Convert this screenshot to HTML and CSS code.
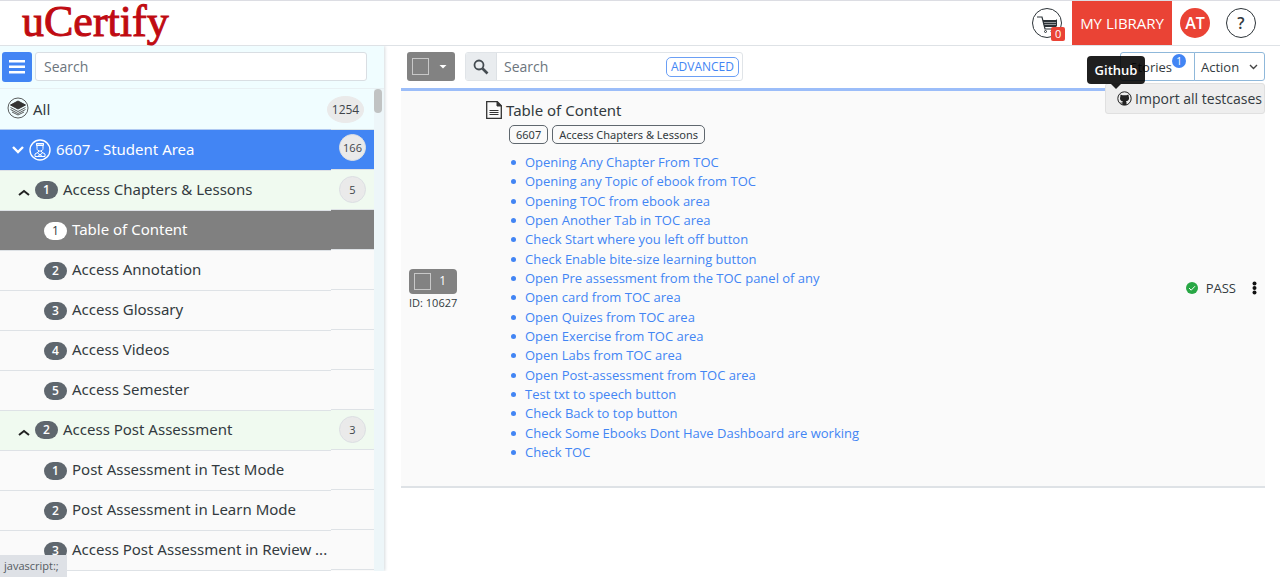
FILE: index.html
```html
<!DOCTYPE html>
<html lang="en">
<head>
<meta charset="utf-8">
<meta name="viewport" content="width=device-width, initial-scale=1">
<title>uCertify</title>
<link rel="stylesheet" href="styles.css">
</head>
<body>
<header class="topbar">
  <a class="logo" href="#">uCertify</a>
  <div class="top-actions">
    <button class="round cart" aria-label="Cart">
      <svg width="30" height="30" viewBox="0 0 30 30" fill="none" stroke="#2c3338"><path d="M4 8h5l3 12h12" stroke-width="1.200"/><path d="M10 12h13.500M10.500 14.500h13M11 17h12" stroke-width="1.800"/><path d="M23.500 10.500v7" /><circle cx="12.500" cy="22.500" r="1"/><circle cx="19" cy="22.500" r="1"/></svg>
      <span class="cart-count">0</span>
    </button>
    <button class="library">MY LIBRARY</button>
    <button class="avatar">AT</button>
    <button class="round help">?</button>
  </div>
</header>
<div class="workspace">
  <aside class="sidebar">
    <div class="side-search">
      <button class="menu-btn" aria-label="Menu"><svg width="16" height="14" viewBox="0 0 16 14" fill="#fff"><path d="M0 0h16v2.500H0zM0 5.500h16V8H0zM0 11h16v2.500H0z"/></svg></button>
      <input class="side-input" type="text" placeholder="Search" aria-label="Search areas">
    </div>
    <div class="tree-wrap">
      <ul class="tree">
        <li class="row all">
          <a class="label" href="#"><svg width="22" height="22" viewBox="0 0 22 22" fill="none" stroke="#333"><circle cx="11" cy="11" r="10" stroke-width=".8"/><path d="M11 4 3.500 8 11 12l7.500-4z" fill="#333"/><path d="M3.500 10.500 11 14.500l7.500-4M3.500 12.500l7.500 4 7.500-4M5 15l6 3 6-3" stroke-width=".8"/></svg><span class="text">All</span></a>
          <span class="end"><span class="count wide">1254</span></span>
        </li>
        <li class="row area">
          <a class="label" href="#"><svg width="12" height="8" viewBox="0 0 12 8" fill="none" stroke="#fff" stroke-width="2.400"><path d="m1 1 5 5 5-5"/></svg><svg class="person" width="22" height="22" viewBox="0 0 22 22" fill="none" stroke="#fff"><circle cx="11" cy="11" r="10" stroke-width="1.400"/><path d="M7 5h8M7.500 4.500h7v2h-7zM8 6.500v3c0 3.500 6 3.500 6 0v-3M9.500 11.500v1.500L6 15v2.500h10V15l-3.500-2v-1.500M8.500 14l5 3.500M13.500 14l-5 3.500"/></svg><span class="text">6607 - Student Area</span></a>
          <span class="end"><span class="count raised">166</span></span>
        </li>
        <li class="row chapter">
          <a class="label" href="#"><svg class="fold" width="12" height="7" viewBox="0 0 12 7" fill="none" stroke="#222" stroke-width="2"><path d="m1 6 5-4 5 4"/></svg><span class="num">1</span><span class="text">Access Chapters &amp; Lessons</span></a>
          <span class="end"><span class="count">5</span></span>
        </li>
        <li class="row lesson active"><a class="label" href="#"><span class="num">1</span><span class="text">Table of Content</span></a><span class="end"></span></li>
        <li class="row lesson"><a class="label" href="#"><span class="num">2</span><span class="text">Access Annotation</span></a><span class="end"></span></li>
        <li class="row lesson"><a class="label" href="#"><span class="num">3</span><span class="text">Access Glossary</span></a><span class="end"></span></li>
        <li class="row lesson"><a class="label" href="#"><span class="num">4</span><span class="text">Access Videos</span></a><span class="end"></span></li>
        <li class="row lesson"><a class="label" href="#"><span class="num">5</span><span class="text">Access Semester</span></a><span class="end"></span></li>
        <li class="row chapter">
          <a class="label" href="#"><svg class="fold" width="12" height="7" viewBox="0 0 12 7" fill="none" stroke="#222" stroke-width="2"><path d="m1 6 5-4 5 4"/></svg><span class="num">2</span><span class="text">Access Post Assessment</span></a>
          <span class="end"><span class="count">3</span></span>
        </li>
        <li class="row lesson"><a class="label" href="#"><span class="num">1</span><span class="text">Post Assessment in Test Mode</span></a><span class="end"></span></li>
        <li class="row lesson"><a class="label" href="#"><span class="num">2</span><span class="text">Post Assessment in Learn Mode</span></a><span class="end"></span></li>
        <li class="row lesson"><a class="label" href="#"><span class="num">3</span><span class="text">Access Post Assessment in Review ...</span></a><span class="end"></span></li>
      </ul>
      <div class="scroll"><div class="thumb"></div></div>
    </div>
  </aside>
  <main class="content">
    <div class="toolbar">
      <div class="select-all"><input class="tick" type="checkbox" aria-label="Select all"><button class="caret" aria-label="Selection options"></button></div>
      <div class="search-group">
        <button class="search-btn" aria-label="Search"><svg width="16" height="16" viewBox="0 0 16 16" fill="none" stroke="#444b51"><circle cx="6" cy="6" r="4.500" stroke-width="1.800"/><path d="m9.500 9.500 5 5" stroke-width="2.600"/></svg></button>
        <input class="search-input" type="text" placeholder="Search" aria-label="Search test cases">
        <button class="advanced">ADVANCED</button>
      </div>
      <div class="menus">
        <button class="menu stories">Stories<span class="story-count">1</span></button>
        <button class="menu action" aria-expanded="true">Action<svg width="9" height="6" viewBox="0 0 9 6" fill="none" stroke="#444" stroke-width="1.400"><path d="m1 1 3.500 3.500L8 1"/></svg></button>
        <div class="dropdown">
          <a href="#" class="import"><svg width="15" height="15" viewBox="0 0 15 15"><circle cx="7.500" cy="7.500" r="6.700" fill="none" stroke="#222"/><path d="M3.500 3.500 5.500 4.200h4l2-.7.300 2.200c1 3-1 4.300-2.800 4.500l.5 1V14h-4v-1.500c-1.300.3-1.800-.5-2.300-1.200 1 .2 1.300.5 2.300.2l.3-1.200C4 10 2.400 8.700 3.300 5.700z" fill="#222"/></svg>Import all testcases</a>
          <div class="tooltip" role="tooltip">Github</div>
        </div>
      </div>
    </div>
    <article class="case">
      <div class="case-id">
        <label class="case-check"><input class="tick" type="checkbox"><span>1</span></label>
        <span class="id-text">ID: 10627</span>
      </div>
      <div class="case-body">
        <h1 class="case-title"><svg width="16" height="18" viewBox="0 0 16 18" fill="none" stroke="#333"><path d="M.7.700h10.600l4 4v12.600H.7z" stroke-width="1.300"/><path d="M11 .7V5h4.300z" fill="#333"/><path d="M3.500 9.500h9M3.500 11.500h9M3.500 13.500h9"/></svg>Table of Content</h1>
        <div class="tags"><span class="tag">6607</span><span class="tag">Access Chapters &amp; Lessons</span></div>
        <ul class="links">
          <li><a href="#">Opening Any Chapter From TOC</a></li>
          <li><a href="#">Opening any Topic of ebook from TOC</a></li>
          <li><a href="#">Opening TOC from ebook area</a></li>
          <li><a href="#">Open Another Tab in TOC area</a></li>
          <li><a href="#">Check Start where you left off button</a></li>
          <li><a href="#">Check Enable bite-size learning button</a></li>
          <li><a href="#">Open Pre assessment from the TOC panel of any</a></li>
          <li><a href="#">Open card from TOC area</a></li>
          <li><a href="#">Open Quizes from TOC area</a></li>
          <li><a href="#">Open Exercise from TOC area</a></li>
          <li><a href="#">Open Labs from TOC area</a></li>
          <li><a href="#">Open Post-assessment from TOC area</a></li>
          <li><a href="#">Test txt to speech button</a></li>
          <li><a href="#">Check Back to top button</a></li>
          <li><a href="#">Check Some Ebooks Dont Have Dashboard are working</a></li>
          <li><a href="#">Check TOC</a></li>
        </ul>
      </div>
      <div class="status">
        <svg width="12" height="12" viewBox="0 0 12 12"><circle cx="6" cy="6" r="6" fill="#28a745"/><path d="m3 6 2.200 2.200L9 4.200" fill="none" stroke="#fff" stroke-width="1"/></svg>
        <span>PASS</span>
        <button class="more" aria-label="More"><svg width="5" height="14" viewBox="0 0 5 14" fill="#111"><circle cx="2.500" cy="2.500" r="2"/><circle cx="2.500" cy="7" r="2"/><circle cx="2.500" cy="11.500" r="2"/></svg></button>
      </div>
    </article>
  </main>
</div>
<div class="statusbar">javascript:;</div>
</body>
</html>
```
FILE: styles.css
```css
* { box-sizing: border-box; }
body { margin: 0; background: #fff; color: #333a40; font: 14px/20px "Open Sans", "Noto Sans", sans-serif; overflow: hidden; }
button, input { font: inherit; color: inherit; margin: 0; }
button { padding: 0; border: 0; background: none; cursor: pointer; }
a { color: inherit; text-decoration: none; }
ul { list-style: none; margin: 0; padding: 0; }
svg { flex: none; display: block; }
::placeholder { color: #6c757d; opacity: 1; }

.topbar { display: flex; justify-content: space-between; align-items: center; height: 46px; padding: 0 24px 0 22px; border-top: 1px solid #dcdde3; border-bottom: 1px solid #dee2e6; }
.logo { padding-bottom: 2px; font: 44px/42px "Liberation Serif", serif; color: #c00b12; -webkit-text-stroke: 1px #c00b12; }
.top-actions { display: flex; align-items: center; }
.round { position: relative; width: 30px; height: 30px; border: 1px solid #2c3338; border-radius: 50%; display: grid; place-items: center; }
.cart { margin-right: 10px; }
.cart-count { position: absolute; right: -4px; bottom: -4px; width: 14px; height: 14px; border-radius: 2px; background: #ea4335; color: #fff; font-size: 11px; line-height: 14px; }
.library { height: 44px; padding: 0 8px; background: #ea4335; color: #fff; font-size: 15px; }
.avatar { width: 30px; height: 30px; margin: 0 16px 0 8px; border-radius: 50%; background: #ea4335; color: #fff; font-size: 16px; font-weight: 600; }
.help { font-size: 16px; font-weight: 600; }

.workspace { display: flex; align-items: flex-start; }
.sidebar { flex: 0 0 30%; min-width: 0; background: #f0fdff; box-shadow: 1px 0 3px #d5dade; clip-path: inset(0 -6px 0 0); }
.side-search { display: flex; gap: 3px; height: 43px; padding: 6px 17px 6px 2px; border-bottom: 1px solid #e8f0f3; }
.menu-btn { width: 30px; height: 30px; border-radius: 3px; background: #4285f4; display: grid; place-items: center; }
.side-input { flex: 1; min-width: 0; height: 29px; padding: 0 8px; border: 1px solid #d9dee3; border-radius: 3px; background: #fff; }
.tree-wrap { display: flex; }
.tree { flex: 1; min-width: 0; }
.scroll { width: 10px; background: #edf6f9; }
.thumb { width: 8px; height: 24px; border-radius: 4px; background: #c1c3c3; }
.row { display: flex; align-items: flex-start; height: 40px; background: #fafafa; }
.row:last-child { height: 41px; }
.label { flex: 1; min-width: 0; height: 41px; display: flex; align-items: center; padding-top: 1px; border-bottom: 1px solid #dee2e6; }
.end { flex: none; width: 43px; height: 40px; border-bottom: 1px solid #dee2e6; display: flex; justify-content: flex-end; align-items: center; padding-right: 8px; }
.text { padding-bottom: 4px; white-space: nowrap; font: 15px/22px "Noto Sans", sans-serif; }
.all { height: 41px; background: #f0fdff; }
.all .label { padding-left: 7px; gap: 4px; border-color: #b0c9f2; }
.all .end { height: 41px; padding-right: 10px; border-color: #dbe4e8; }
.all .label svg { margin-bottom: 3px; }
.all .text { padding-bottom: 2px; }
.area { background: #4285f4; color: #fff; }
.area .label { padding-left: 12px; gap: 5px; }
.area .label svg { margin-bottom: 2px; }
.chapter { background: #f0faf0; }
.chapter .label { padding-left: 18px; gap: 5px; }
.chapter .num { margin-bottom: 2px; }
.chapter .fold { margin-top: 3px; }
.lesson .label { padding-left: 44px; gap: 5px; }
.active { background: #808080; color: #fff; }
.num { width: 23px; height: 18px; border-radius: 9px; background: #5f676e; color: #fff; font-size: 12px; font-weight: 600; line-height: 18px; text-align: center; }
.active .num { background: #fff; color: #333a40; font-weight: 400; }
.count { width: 27px; height: 27px; border: 1px solid #dcdfe3; border-radius: 50%; background: #eaeaea; color: #40454a; font-size: 11px; line-height: 25px; text-align: center; }
.wide { flex: none; width: 37px; font-size: 12px; border-color: #eaeaea; }
.raised { margin-bottom: 5px; }

.content { flex: 1; min-width: 0; padding: 6px 15px 0 17px; }
.toolbar { display: flex; align-items: flex-start; height: 36px; padding-left: 6px; }
.select-all { display: flex; align-items: center; justify-content: space-between; width: 48px; height: 29px; padding: 0 8px 0 5px; border-radius: 3px; background: #828282; }
.tick { appearance: none; width: 17px; height: 17px; border: 1px solid #c8c8c8; background: none; }
.caret { width: 8px; height: 4px; background: #fff; clip-path: polygon(0 0, 100% 0, 50% 100%); }
.search-group { display: flex; align-items: center; width: 278px; height: 29px; margin-left: 10px; border: 1px solid #e0e4e8; border-radius: 3px; overflow: hidden; }
.search-btn { width: 31px; height: 27px; background: #e9ecef; border-right: 1px solid #dde1e5; display: grid; place-items: center; }
.search-input { flex: 1; min-width: 0; height: 27px; padding: 0 7px; border: 0; }
.advanced { height: 20px; margin-right: 3px; padding: 0 4px; border: 1px solid #6b9ff5; border-radius: 5px; color: #4285f4; font-size: 12px; line-height: 18px; }
.menus { position: relative; display: flex; margin-left: auto; }
.menu { height: 29px; border: 1px solid #8fb8da; background: #fff; font-size: 13px; }
.stories { position: relative; width: 75px; padding-right: 22px; text-align: right; border-radius: 3px 0 0 3px; }
.story-count { position: absolute; top: 1px; right: 8px; width: 14px; height: 14px; border-radius: 50%; background: #4285f4; color: #fff; font-size: 10px; line-height: 14px; text-align: center; }
.action { width: 71px; margin-left: -1px; display: flex; align-items: center; justify-content: space-between; padding: 0 6px; border-radius: 0 3px 3px 0; }
.dropdown { position: absolute; z-index: 2; top: 31px; right: 0; width: 160px; height: 31px; border: 1px solid #e0e0e0; border-radius: 3px; background: #eee; }
.import { display: flex; align-items: center; justify-content: flex-end; gap: 3px; height: 29px; padding-right: 2px; white-space: nowrap; }
.tooltip { position: absolute; top: -28px; left: -19px; width: 58px; height: 28px; border-radius: 4px; background: #000000e0; color: #fff; font-size: 13px; font-weight: 600; line-height: 28px; text-align: center; }
.tooltip::after { content: ""; position: absolute; top: 28px; left: 24px; border: 5px solid transparent; border-top-color: #000000e0; border-bottom: 0; }

.case { display: flex; align-items: center; padding: 9px 0 24px 8px; border-top: 3px solid #9bbdf9; border-bottom: 2px solid #dee2e6; background: #fafafa; }
.case-id { width: 48px; padding-top: 18px; font-size: 11px; }
.case-check { display: flex; align-items: center; justify-content: space-between; height: 25px; padding: 0 11px 0 5px; border-radius: 4px; background: #828282; color: #fff; font-size: 12px; }
.id-text { display: block; line-height: 18px; white-space: nowrap; }
.case-body { flex: 1; min-width: 0; padding-left: 29px; }
.case-title { display: flex; align-items: center; gap: 4px; margin: 0; font: 15px/20px "Noto Sans", sans-serif; }
.tags { display: flex; gap: 4px; padding: 5px 0 9px 23px; }
.tag { height: 19px; padding: 0 6px; border: 1px solid #5f676e; border-radius: 5px; font: 11px/17px "Noto Sans", sans-serif; }
.links { display: grid; grid-auto-rows: 1fr; min-height: 309px; padding-left: 24px; color: #4285f4; font-size: 13px; line-height: 19px; }
.links li { display: flex; align-items: center; }
.links li::before { content: ""; width: 5px; height: 5px; margin: 0 9px 0 1px; border-radius: 50%; background: #4285f4; }
.status { display: flex; align-items: center; padding: 14px 8px 0 0; font-size: 13px; }
.status span { margin: 0 16px 0 8px; }
.statusbar { position: fixed; left: 0; bottom: 0; padding: 0 8px 0 4px; background: #dee1e6; color: #555b61; font-size: 11px; line-height: 22px; }
```
